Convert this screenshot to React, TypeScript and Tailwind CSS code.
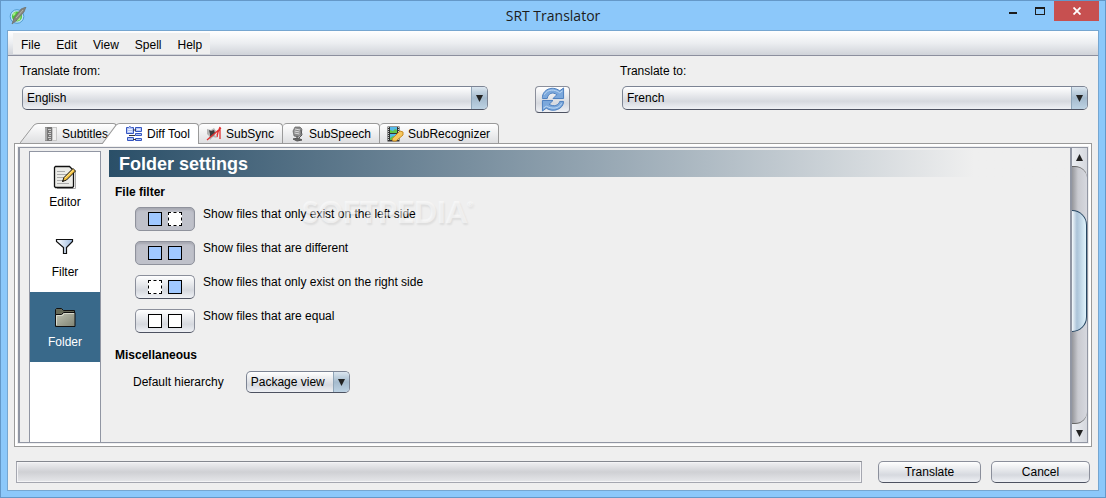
import { useState } from 'react'
import type { ReactNode } from 'react'

const metal = 'bg-gradient-to-b from-white via-[#d6d9df] via-65% to-[#eff1f5]'

const AppIcon = () => (
  <svg width="18" height="18" viewBox="0 0 18 18">
    <circle cx="8" cy="9.500" r="6.800" fill="#b9e0f4" stroke="#4f9bd0" strokeWidth="1" />
    <circle cx="8" cy="9.500" r="5" fill="#4fc63c" />
    <path d="M4 6l3-1-1 3-2 1zM8 10l4-2-1 5-3 1z" fill="#a5ea84" />
    <path d="M17 0l-5 2-7 9-2 6 4-3 8-9z" fill="#85857e" stroke="#66665f" strokeWidth=".6" />
    <path d="M14 3L7 11" stroke="#b5b5aa" />
  </svg>
)

const SwapIcon = () => (
  <svg width="24" height="25" viewBox="0 0 24 26" fill="#7ba8dc" stroke="#4a7dbd" strokeWidth="1" strokeLinejoin="round">
    <path d="M1 11C1 3 11-2 19 4L23 1v11H12l4-4C12 5 7 6 6 12H1z" />
    <path d="M23 15c0 8-11 12-18 7l-4 3V14h11l-4 4c5 3 10 1 11-3z" />
    <path d="M3 8c3-6 11-6 16-2l3-2M21 17c-3 6-10 6-16 3l-3 2" fill="none" stroke="#bdd8f4" />
  </svg>
)

const SubtitlesIcon = () => (
  <svg width="14" height="16" viewBox="0 0 14 16">
    <rect x="1" y="1" width="7" height="14" fill="#777" />
    <path d="M2 1.500v13" stroke="#ddd" />
    <path d="M4 3.500h3M5 5.500h2M4 7.500h3M5 9.500h2M4 11.500h3M5 13.500h2" stroke="#ccc" />
    <rect x="8.500" y="1.500" width="4" height="13" fill="#efefef" stroke="#c9c9c9" />
  </svg>
)

const DiffIcon = () => (
  <svg width="17" height="16" viewBox="0 0 17 16" fill="#b5c6f5" stroke="#3555c0">
    <path d="M.5 1.500h2l1-1 2 1h2v6h-7zM9.500 1.500h6v4h-6zM9.500 7.500h6v2h-6zM9.500 12.500h6v2h-6zM1.500 11.500h6v3h-6z" />
    <path d="M7 4h3M3 9.500h6M7 13.500h3" stroke="#333" />
    <path d="M2 3.500h4M2 5.500h4M11 3.500h3" stroke="#e8edff" />
  </svg>
)

const SyncIcon = () => (
  <svg width="16" height="16" viewBox="0 0 16 16">
    <path d="M1 3l4 1 3-2 2 3-1 4 2 3-4-1-3 3-1-4-2-2z" fill="#b5b5b5" />
    <path d="M3 4l2 1 3-1 1 3-2 3-3 1v-3z" fill="#3c3c3c" />
    <path d="M1 14L15 2M11 9l3-8v12M12 6l-1 5" fill="none" stroke="#e23030" strokeWidth="1.300" />
  </svg>
)

const SpeechIcon = () => (
  <svg width="15" height="16" viewBox="0 0 15 16">
    <path d="M5 1h5l2 2-1 6-3 2-4-1-1-5z" fill="#8b8b8b" stroke="#666" strokeWidth=".7" />
    <path d="M5 3l5 1M4.500 5l5 1M4.500 7l5 1" stroke="#ddd" />
    <path d="M7 10v3M3 13l5-1 4 2-5 1z" stroke="#555" fill="#666" />
    <path d="M11 4l1 5-3 3" fill="none" stroke="#555" />
  </svg>
)

const RecognizerIcon = () => (
  <svg width="17" height="16" viewBox="0 0 17 16">
    <path d="M.5.500h12v15H.5z" fill="#333" />
    <path d="M1.500 1v14M11.500 1v14" stroke="#ccc" strokeDasharray="1 1" />
    <path d="M3 1h7v6H3zM3 8h7v6H3z" fill="#54b9e8" />
    <path d="M3 4l3 1 2-2 2 1v3H3zM3 12l3-2 4 2v2H3z" fill="#60c34a" />
    <path d="M6 15l-1-2 8-8 3 1v3l-7 6z" fill="#f6c75e" stroke="#c98c21" />
  </svg>
)

const EditorIcon = () => (
  <svg width="24" height="24" viewBox="0 0 24 24">
    <path d="M4 23.500h18.500V6" fill="none" stroke="#aaa" />
    <path d="M1.500 2.500l1-1h14l4 4v16l-1 1h-17l-1-1z" fill="#ecece8" stroke="#111" strokeWidth="1.300" />
    <path d="M4 6.500h8M4 9.500h11M4 12.500h7M4 15.500h6M4 18.500h12" stroke="#aaa" />
    <path d="M9.500 16.500l1.500-4 9-9 2.500 2.500-9 9z" fill="#f5c13c" stroke="#111" />
    <path d="M12 13l8.500-8" stroke="#ffe795" />
    <path d="M9 17l2-1-1-1z" fill="#111" />
  </svg>
)

const FilterIcon = () => (
  <svg width="20" height="18" viewBox="0 0 20 18">
    <defs>
      <linearGradient id="funnel">
        <stop offset="0" stopColor="#fff" />
        <stop offset="1" stopColor="#9dbbe0" />
      </linearGradient>
    </defs>
    <path d="M1.500 1.500h16v2l-6 6v6h-3v-6l-7-6z" fill="url(#funnel)" stroke="#111" strokeWidth="1.200" />
  </svg>
)

const FolderIcon = () => (
  <svg width="23" height="21" viewBox="0 0 23 21">
    <defs>
      <linearGradient id="folder" x2="1" y2="1">
        <stop offset="0" stopColor="#c1c4b4" />
        <stop offset="1" stopColor="#7f8373" />
      </linearGradient>
    </defs>
    <path d="M1.500 19V2.500l1-1h5l2 2h11v3" fill="#666957" stroke="#111" />
    <path d="M1.500 7.500h6l2-2h11.500v14H1.500z" fill="url(#folder)" stroke="#111" />
    <path d="M2.500 18V8.500h6l2-2H20" fill="none" stroke="#d8dacd" />
  </svg>
)

const Triangle = ({ up = false }: { up?: boolean }) => (
  <svg width="7" height="7" viewBox="0 0 8 8" fill="#222">
    <path d={up ? 'M0 8L4 0l4 8z' : 'M0 0h8L4 8z'} />
  </svg>
)

type ComboProps = { id: string; options: string[]; className?: string }

const Combo = ({ id, options, className = '' }: ComboProps) => (
  <div className={`relative flex overflow-hidden rounded-[5px] border border-[#7c8494] border-b-[#4d5261] ${metal} ${className}`}>
    <select id={id} className="w-full appearance-none bg-transparent pl-1 pr-5 text-xs text-black outline-none">
      {options.map((option) => (
        <option key={option}>{option}</option>
      ))}
    </select>
    <span className="pointer-events-none absolute inset-y-0 right-0 flex w-4 items-center justify-center border-l border-[#8fa5b8] bg-gradient-to-b from-[#dbe6ef] via-[#a4bacd] to-[#bdd2e3]">
      <Triangle />
    </span>
  </div>
)

type TabProps = { label: string; icon: ReactNode; active: boolean; slanted?: boolean; onClick: () => void }

const Tab = ({ label, icon, active, slanted, onClick }: TabProps) => {
  const fill = active ? 'bg-white' : 'bg-gradient-to-b from-white to-[#dedfe1]'
  return (
    <button
      role="tab"
      aria-selected={active}
      onClick={onClick}
      className={`flex ${slanted ? '-ml-[15px]' : ''} ${active ? 'z-10 -mb-px h-[21px]' : 'h-5'}`}
    >
      {slanted && (
        <svg width="18" height="100%" viewBox="0 0 18 20" preserveAspectRatio="none">
          <defs>
            <linearGradient id="tabFill" x2="0" y2="1">
              <stop offset="0" stopColor="#fff" />
              <stop offset="1" stopColor="#dedfe1" />
            </linearGradient>
          </defs>
          <path d="M0 20L14 2Q16 .5 18 .5V20z" fill={active ? '#fff' : 'url(#tabFill)'} />
          <path d="M0 20L14 2Q16 .5 18 .5" fill="none" stroke="#9a9a9a" />
        </svg>
      )}
      <span className={`flex h-full items-center gap-1 rounded-tr border-t border-r border-[#9a9a9a] pr-2 ${slanted ? 'pl-1.5' : 'rounded-tl pl-[7px]'} ${fill}`}>
        {icon}
        {label}
      </span>
    </button>
  )
}

const boxStyles = {
  full: 'border-solid bg-[#a0c8ff]',
  empty: 'border-solid bg-white',
  missing: 'border-dashed bg-white',
}

type Box = keyof typeof boxStyles

const filters: { id: string; label: string; boxes: Box[] }[] = [
  { id: 'left-only', label: 'Show files that only exist on the left side', boxes: ['full', 'missing'] },
  { id: 'different', label: 'Show files that are different', boxes: ['full', 'full'] },
  { id: 'right-only', label: 'Show files that only exist on the right side', boxes: ['missing', 'full'] },
  { id: 'equal', label: 'Show files that are equal', boxes: ['empty', 'empty'] },
]

const tabs = [
  { label: 'Subtitles', icon: <SubtitlesIcon /> },
  { label: 'Diff Tool', icon: <DiffIcon /> },
  { label: 'SubSync', icon: <SyncIcon /> },
  { label: 'SubSpeech', icon: <SpeechIcon /> },
  { label: 'SubRecognizer', icon: <RecognizerIcon /> },
]

const sections = [
  { label: 'Editor', icon: <EditorIcon /> },
  { label: 'Filter', icon: <FilterIcon /> },
  { label: 'Folder', icon: <FolderIcon /> },
]

const App = () => {
  const [tab, setTab] = useState('Diff Tool')
  const [section, setSection] = useState('Folder')
  const [pressed, setPressed] = useState(['left-only', 'different'])

  const toggle = (id: string) =>
    setPressed((ids) => (ids.includes(id) ? ids.filter((i) => i !== id) : [...ids, id]))

  return (
    <div className="flex min-h-screen flex-col border border-[#6498c8] bg-[#8cc8fa] px-1.5 pb-1.5 font-['Liberation_Sans',Arial,sans-serif] text-xs text-black">
      {/* Title bar */}
      <header className="grid h-[29px] grid-cols-[1fr_auto_1fr]">
        <div className="flex items-center pl-0.5">
          <AppIcon />
        </div>
        <h1 className="self-center font-['Open_Sans',sans-serif] text-sm text-[#1c1c1c]">SRT Translator</h1>
        <div className="flex h-5 justify-end">
          <button aria-label="Minimize" className="flex w-[26px] items-center justify-center pt-1">
            <span className="h-0.5 w-2 bg-[#1c1c1c]" />
          </button>
          <button aria-label="Maximize" className="flex w-7 items-center justify-center">
            <span className="h-2 w-2.5 border border-t-2 border-[#1c1c1c]" />
          </button>
          <button aria-label="Close" className="flex w-[45px] items-center justify-center bg-[#c75050]">
            <svg width="8" height="8" viewBox="0 0 8 8" stroke="#fff" strokeWidth="1.800">
              <path d="M.5.500l7 7M7.500.500l-7 7" />
            </svg>
          </button>
        </div>
      </header>

      <div className="flex flex-1 flex-col border border-[#76a6d0] bg-[#efefef]">
        {/* Menu */}
        <nav className="flex h-[25px] border-b border-[#8c8f9e] bg-gradient-to-b from-white via-[#eceef1] via-50% to-[#d0d3d9] pt-0.5 pb-px pl-[5px]">
          <div className="flex bg-[#efefef]">
            {['File', 'Edit', 'View', 'Spell', 'Help'].map((item) => (
              <button key={item} className="px-2 pt-0.5">{item}</button>
            ))}
          </div>
        </nav>

        {/* Languages */}
        <div className="flex h-[57px] pr-2 pl-3">
          <div className="flex flex-1 flex-col gap-[7px] pt-[7px]">
            <label htmlFor="from">Translate from:</label>
            <Combo id="from" options={['English', 'French']} className="mx-0.5 h-6 shrink-0" />
          </div>
          <button aria-label="Swap languages" className={`mr-[50px] ml-[45px] flex h-[27px] w-[35px] justify-center self-end rounded border border-[#8b8f9b] border-b-[#4d5261] ${metal}`}>
            <SwapIcon />
          </button>
          <div className="flex flex-1 flex-col gap-[7px] pt-[7px]">
            <label htmlFor="to">Translate to:</label>
            <Combo id="to" options={['French', 'English']} className="mx-0.5 h-6 shrink-0" />
          </div>
        </div>

        {/* Tabs */}
        <div role="tablist" className="mt-2.5 flex pl-[27px]">
          {tabs.map((t, idx) => (
            <Tab key={t.label} {...t} slanted={idx < 2} active={tab === t.label} onClick={() => setTab(t.label)} />
          ))}
        </div>

        <div className="mx-1.5 flex flex-1 border border-[#9a9a9a] bg-[#efefef] p-[3px] shadow-[inset_0_0_0_2px_white]">
          <div className="flex flex-1 border border-l-2 border-[#9196a3]">
            {/* Sections */}
            <nav className="mt-[3px] ml-[9px] w-[72px] border-x border-t border-[#9196a3] bg-white">
              {sections.map((s) => (
                <button
                  key={s.label}
                  onClick={() => setSection(s.label)}
                  className={`flex h-[70px] w-full flex-col items-center pb-3 ${section === s.label ? 'bg-[#39698a] text-white' : ''}`}
                >
                  <span className="flex flex-1 items-center pt-2">{s.icon}</span>
                  {s.label}
                </button>
              ))}
            </nav>

            {/* Folder settings */}
            <main className="relative mt-0.5 ml-2 flex-1">
              <h2 className="h-[27px] bg-linear-to-r from-[#2a4f68] to-[#efefef] to-90% pl-2.5 text-lg leading-7 font-bold text-white">
                Folder settings
              </h2>
              <h3 className="mt-[7px] ml-1.5 font-bold">File filter</h3>
              <div className="mt-[7px] ml-[26px] flex flex-col gap-[9px]">
                {filters.map((f) => {
                  const on = pressed.includes(f.id)
                  return (
                    <div key={f.id} className="flex h-[25px] items-start gap-2">
                      <button
                        id={f.id}
                        aria-pressed={on}
                        onClick={() => toggle(f.id)}
                        className={`flex h-6 w-[60px] items-center justify-center gap-1.5 rounded-[5px] border ${
                          on ? 'border-[#8f929c] bg-[#bfc1ca] shadow-[inset_0_2px_2px_#a7a9b2]' : `border-[#8b8f9b] border-b-[#4d5261] ${metal}`
                        }`}
                      >
                        {f.boxes.map((box, idx) => (
                          <span key={idx} className={`size-3.5 border border-black ${boxStyles[box]}`} />
                        ))}
                      </button>
                      <label htmlFor={f.id} className="leading-[14px]">{f.label}</label>
                    </div>
                  )
                })}
              </div>
              <h3 className="mt-[13px] ml-1.5 font-bold">Miscellaneous</h3>
              <div className="mt-2 ml-6 flex items-center gap-[22px]">
                <label htmlFor="hierarchy">Default hierarchy</label>
                <Combo id="hierarchy" options={['Package view', 'File view']} className="h-[22px] w-[104px]" />
              </div>
              <span className="pointer-events-none absolute top-[43px] left-[193px] font-[Lato,sans-serif] text-3xl font-black text-white/50 [text-shadow:1px_2px_2px_rgb(0_0_0/0.08)]">
                SOFTPEDIA<sup className="-top-4 text-[8px]">®</sup>
              </span>
            </main>

            {/* Scroll bar */}
            <div className="flex w-[17px] flex-col border-l-2 border-[#9196a3] bg-gradient-to-r from-[#eceef2] to-[#d6d9df]">
              <button aria-label="Scroll up" className="flex h-[18px] items-center justify-center">
                <Triangle up />
              </button>
              <div className="flex flex-1 flex-col rounded-r-xl border-y border-[#666] bg-gradient-to-r from-[#96979c] via-[#c9cad0] via-40% to-[#d6d8df]">
                <div className="flex-[44]" />
                <div className="flex-[121] rounded-r-2xl border border-l-0 border-[#274763] bg-gradient-to-r from-[#f4f9fc] via-[#abc3d8] via-35% to-[#e0f3fc]" />
                <div className="flex-[92]" />
              </div>
              <button aria-label="Scroll down" className="flex h-[18px] items-center justify-center">
                <Triangle />
              </button>
            </div>
          </div>
        </div>

        {/* Progress and actions */}
        <footer className="mt-3.5 mb-[7px] flex pr-2 pl-2">
          <div role="progressbar" aria-label="Progress" className="mr-4 flex-1 border border-[#a5a7b0] border-t-[#85888f] bg-gradient-to-b from-[#f0f0f2] via-[#cfd0d4] to-[#e6e7ea] shadow-[inset_0_0_0_1px_#f4f4f6]" />
          <button className={`mr-2.5 h-[22px] w-[103px] rounded-[5px] border border-[#8b8f9b] border-b-[#4d5261] ${metal}`}>Translate</button>
          <button className={`h-[22px] w-[99px] rounded-[5px] border border-[#8b8f9b] border-b-[#4d5261] ${metal}`}>Cancel</button>
        </footer>
      </div>
    </div>
  )
}

export default App
